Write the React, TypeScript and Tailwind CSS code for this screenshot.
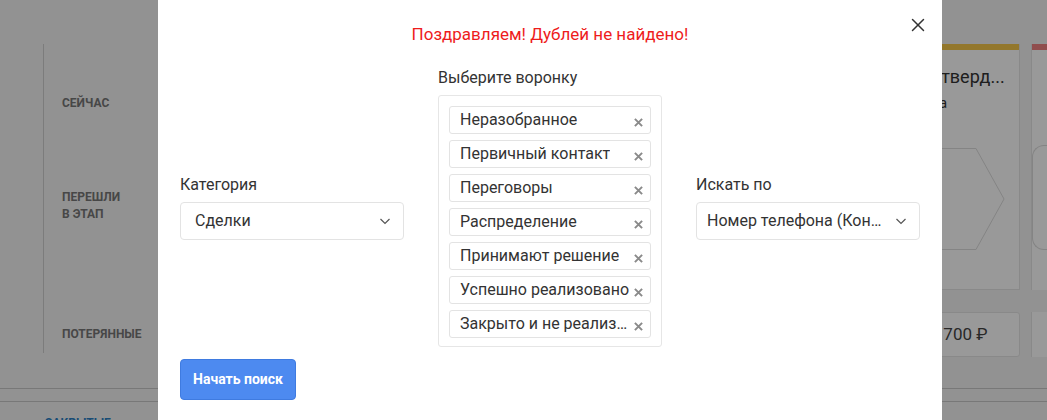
import { X } from "lucide-react";

const stages = [
  "Неразобранное",
  "Первичный контакт",
  "Переговоры",
  "Распределение",
  "Принимают решение",
  "Успешно реализовано",
  "Закрыто и не реализовано",
];

function Chevron() {
  return (
    <svg width="12" height="12" viewBox="0 0 12 12" fill="none" className="shrink-0">
      <path d="M1.5 4l4.5 4.5L10.5 4" stroke="#555" strokeWidth="1.2" />
    </svg>
  );
}

function Remove() {
  return (
    <svg width="9" height="9" viewBox="0 0 10 10" fill="none" className="mt-[4px] shrink-0">
      <path d="M1 1l8 8M9 1L1 9" stroke="#8a8a8a" strokeWidth="2.2" />
    </svg>
  );
}

function Select({ value, pad }: { value: string; pad: string }) {
  return (
    <div className={`flex h-[38px] items-center justify-between gap-2 rounded-[4px] border border-[#e3e3e3] bg-white pr-[12px] ${pad}`}>
      <span className="truncate text-[16px] text-[#333]">{value}</span>
      <Chevron />
    </div>
  );
}

function Backdrop() {
  return (
    <div className="flex h-[420px] w-[1047px] flex-col bg-[#f3f3f3] font-['Roboto',sans-serif]">
      <div className="flex h-[388px] shrink-0 pt-[44px]">
        <div className="ml-[43px] flex h-[309px] w-[120px] flex-col border-l border-[#cfcfcf] pl-[18px] text-[12px] font-bold uppercase leading-[17px] text-[#777]">
          <span className="mt-[51px]">Сейчас</span>
          <span className="mt-[77px]">Перешли<br />в этап</span>
          <span className="mt-[103px]">Потерянные</span>
        </div>
        <div className="ml-auto flex gap-[11px]">
          <div className="flex w-[125px] flex-col">
            <div className="flex h-[246px] flex-col border-x border-b border-[#e5e5e5] bg-white">
              <div className="h-[6px] bg-[#f5c64a]" />
              <span className="mt-[13px] whitespace-nowrap pl-[12px] text-[18px] text-[#333]">Подтверд...</span>
              <span className="mt-[2px] pl-[4px] text-[15px] text-[#333]">Сумма</span>
              <div className="mt-[33px] h-[102px]">
                <svg width="124" height="102" viewBox="0 0 124 102" fill="none">
                  <path d="M0 0.5H80L108 51L80 101.5H0" stroke="#dcdcdc" />
                </svg>
              </div>
            </div>
            <div className="mt-[22px] flex h-[45px] items-center whitespace-nowrap rounded-[3px] border border-[#e5e5e5] bg-white pl-[24px] text-[17px] text-[#444]">
              21 700 ₽
            </div>
          </div>
          <div className="flex w-[16px] flex-col">
            <div className="flex h-[246px] flex-col border-l border-[#e5e5e5] bg-white">
              <div className="h-[6px] bg-[#f08080]" />
              <div className="mt-[95px] h-[105px] rounded-l-[12px] border-y border-l border-[#dcdcdc]" />
            </div>
            <div className="mt-[22px] h-[45px] border-l border-[#e5e5e5] bg-white" />
          </div>
        </div>
      </div>
      <div className="h-[14px] shrink-0 border-y border-[#c8c8c8]" />
      <div className="shrink-0 pl-[45px] pt-[12px] text-[12px] font-bold uppercase text-[#2a7fc4]">Закрытые</div>
    </div>
  );
}

export default function App() {
  return (
    <div className="relative h-[420px] w-[1047px] overflow-hidden font-['Roboto',sans-serif]">
      <Backdrop />
      <div className="absolute inset-0 bg-black/40" />
      <div className="absolute left-[158px] top-0 h-[440px] w-[784px] bg-white px-[22px]">
        <button className="absolute right-[13px] top-[14px] text-[#333]">
          <X size={22} strokeWidth={1.6} />
        </button>
        <h2 className="pt-[22px] text-center text-[17px] leading-[24px] text-[#ee1c1c]">
          Поздравляем! Дублей не найдено!
        </h2>
        <div className="mt-[22px] flex items-center justify-between">
          <div className="flex w-[224px] flex-col">
            <label className="mb-[7px] text-[16px] leading-[20px] text-[#333]">Категория</label>
            <Select value="Сделки" pad="pl-[14px]" />
          </div>
          <div className="flex w-[224px] flex-col">
            <label className="mb-[7px] text-[16px] leading-[20px] text-[#333]">Выберите воронку</label>
            <div className="flex flex-col gap-[6px] rounded-[3px] border border-[#e6e6e6] px-[10px] pb-[8px] pt-[10px]">
              {stages.map((stage) => (
                <div
                  key={stage}
                  className="flex h-[28px] items-center justify-between gap-[3px] rounded-[3px] border border-[#e3e3e3] pl-[10px] pr-[7px]"
                >
                  <span className="truncate text-[16px] text-[#333]">{stage}</span>
                  <Remove />
                </div>
              ))}
            </div>
          </div>
          <div className="flex w-[224px] flex-col">
            <label className="mb-[7px] text-[16px] leading-[20px] text-[#333]">Искать по</label>
            <Select value="Номер телефона (Контакт)" pad="pl-[10px]" />
          </div>
        </div>
        <button className="mt-[12px] h-[41px] w-[116px] rounded-[4px] border border-[#3f7be0] bg-[#4d8af0] text-[14px] font-bold text-white">
          Начать поиск
        </button>
      </div>
    </div>
  );
}
